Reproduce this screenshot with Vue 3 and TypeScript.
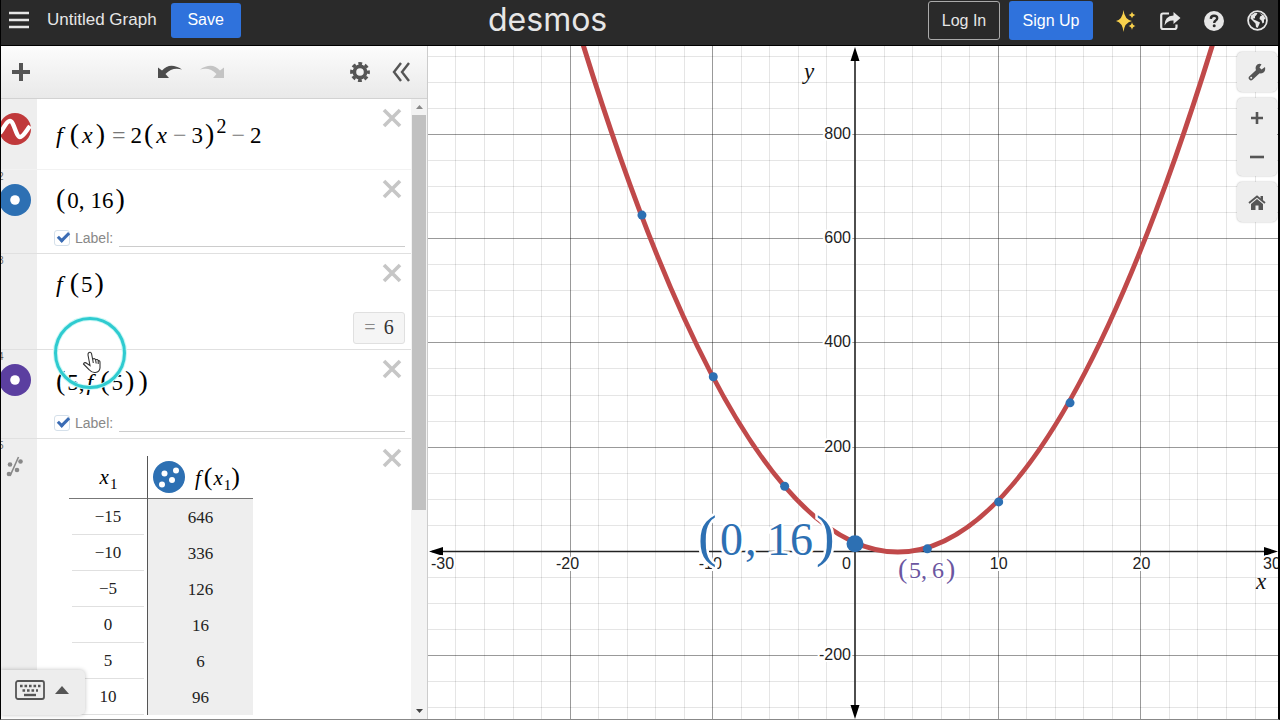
<script setup lang="ts">
import { defineComponent, h } from 'vue'

interface Expression {
  id: number
  kind: string
  icon: 'curve' | 'point' | 'none'
  color: string
  math: string
  label: boolean
  value: string
}

const expressions: Expression[] = [
  { id: 1, kind: 'first', icon: 'curve', color: '#c0393b', math: 'f(x)=2(x−3)^2−2', label: false, value: '' },
  { id: 2, kind: 'labelled', icon: 'point', color: '#2d70b3', math: '(0,16)', label: true, value: '' },
  { id: 3, kind: 'evaluated', icon: 'none', color: '', math: 'f(5)', label: false, value: '6' },
  { id: 4, kind: 'nested', icon: 'point', color: '#5b3fa0', math: '(5,f(5))', label: true, value: '' },
]

const rows = [
  ['−15', '646'],
  ['−10', '336'],
  ['−5', '126'],
  ['0', '16'],
  ['5', '6'],
  ['10', '96'],
]

const tokenClass = (c: string): string => {
  if (c === 'f') return 'fn'
  if (c === 'x') return 'var'
  if (c === '(' || c === ')') return 'par'
  if (c === '=' || c === '−') return 'op'
  if (c === ',') return 'comma'
  return 'num'
}

const MathText = defineComponent({
  props: { source: { type: String, required: true } },
  setup(props) {
    return () => {
      const out = []
      const s = props.source
      for (let i = 0; i < s.length; i++) {
        if (s[i] === '^') out.push(h('sup', s[++i]))
        else if (s[i] === '_') out.push(h('sub', s[++i]))
        else out.push(h('span', { class: tokenClass(s[i]) }, s[i]))
      }
      return h('span', { class: 'math' }, out)
    }
  },
})

const W = 850
const H = 673
const OX = 427
const OY = 505
const px = (x: number): number => OX + x * 14.27
const py = (y: number): number => OY - y * 0.5215
const f = (x: number): number => 2 * (x - 3) ** 2 - 2

const minorX = Array.from({ length: 31 }, (_, i) => (i - 15) * 2).filter((x) => x % 10 !== 0)
const minorY = Array.from({ length: 27 }, (_, i) => (i - 7) * 50).filter((y) => y % 200 !== 0)
const majorX = [-20, -10, 10, 20]
const majorY = [-200, 200, 400, 600, 800]
const curve = `M${px(-23)} ${py(f(-23))}Q${px(3)} ${py(-1354)} ${px(29)} ${py(f(29))}`
const points = [-15, -10, -5, 5, 10, 15]
const snap = (v: number): number => Math.round(v) + 0.5
</script>

<template>
  <div class="page">
    <header class="bar">
      <div class="left">
        <button class="icon" aria-label="Menu">
          <svg width="20" height="18" viewBox="0 0 20 18"><path d="M0 2h20M0 9h20M0 16h20" stroke="#e6e6e6" stroke-width="2.6" /></svg>
        </button>
        <span class="title">Untitled Graph</span>
        <button class="blue save">Save</button>
      </div>
      <a class="logo" href="#">desmos</a>
      <div class="right">
        <button class="outline">Log In</button>
        <button class="blue signup">Sign Up</button>
        <button class="icon" aria-label="What's new">
          <svg width="22" height="22" viewBox="0 0 22 22" fill="#f8d14c">
            <path d="M8.500 0Q9.500 9.500 17 11Q9.500 12.500 8.500 22Q7.500 12.500 1 11Q7.500 9.500 8.500 0Z" />
            <path d="M17 1.500Q17.500 4.500 20.500 5Q17.500 5.500 17 8.500Q16.500 5.500 13.500 5Q16.500 4.500 17 1.500ZM17 12Q17.500 15.500 20.500 16Q17.500 16.500 17 20Q16.500 16.500 13.500 16Q16.500 15.500 17 12Z" />
          </svg>
        </button>
        <button class="icon" aria-label="Share">
          <svg width="22" height="20" viewBox="0 0 22 20">
            <path d="M10 2.500H4Q2.200 2.500 2.200 4.500V16Q2.200 18 4 18H15.500Q17.500 18 17.500 16V13.500" fill="none" stroke="#e6e6e6" stroke-width="2.200" />
            <path d="M14.500 1L21.500 7L14.500 13V9.500Q9 9 5.500 14.500Q5.500 5 14.500 4.500Z" fill="#e6e6e6" />
          </svg>
        </button>
        <button class="icon" aria-label="Help">
          <svg width="20" height="20" viewBox="0 0 20 20">
            <circle cx="10" cy="10" r="10" fill="#e6e6e6" />
            <path d="M6.800 7.800Q7 4.800 10 4.800Q13.200 4.800 13.200 7.300Q13.200 8.600 11.600 9.600Q10.200 10.400 10.200 12" fill="none" stroke="#2b2b2b" stroke-width="2.400" />
            <circle cx="10.200" cy="14.800" r="1.500" fill="#2b2b2b" />
          </svg>
        </button>
        <button class="icon" aria-label="Language">
          <svg width="21" height="21" viewBox="0 0 21 21">
            <circle cx="10.500" cy="10.500" r="9.400" fill="none" stroke="#e6e6e6" stroke-width="1.800" />
            <path d="M4 5.500L7.500 3L10.500 3L9.500 5L8 6.500L8 8.500L6.500 8L6.500 9.500L9 10.500L13 12.500L12 15L10.500 18L9 17L8.500 13.500L6.500 11.500L3.500 8.500Z M12.500 3L17 5.500L18.500 9L17 9.500L17 12.500L15.500 13.500L14.500 10.500L12.500 9L13 6.500L15 5.500Z" fill="#e6e6e6" />
          </svg>
        </button>
      </div>
    </header>

    <main class="work">
      <section class="panel">
        <div class="tools">
          <button class="icon" aria-label="Add item">
            <svg width="20" height="20" viewBox="0 0 20 20"><path d="M10 1V19M1 10H19" stroke="#555" stroke-width="4" /></svg>
          </button>
          <div class="history">
            <button class="icon" aria-label="Undo">
              <svg width="24" height="14" viewBox="0 0 24 14" fill="#4d4d4d"><path d="M0 2.500L4 5.500Q12-3.500 24 4.500Q14.500 1.500 7.500 9L11 13H0Z" /></svg>
            </button>
            <button class="icon" aria-label="Redo">
              <svg width="24" height="14" viewBox="0 0 24 14" fill="#c4c4c4"><path d="M24 2.500L20 5.500Q12-3.500 0 4.500Q9.500 1.500 16.500 9L13 13H24Z" /></svg>
            </button>
          </div>
          <div class="settings">
            <button class="icon" aria-label="Settings">
              <svg width="20" height="20" viewBox="0 0 20 20">
                <circle cx="10" cy="10" r="8.400" fill="none" stroke="#555" stroke-width="3" stroke-dasharray="3.800 2.797" stroke-dashoffset="1.900" />
                <circle cx="10" cy="10" r="5.600" fill="none" stroke="#555" stroke-width="3.600" />
              </svg>
            </button>
            <button class="icon" aria-label="Hide list">
              <svg width="18" height="20" viewBox="0 0 18 20"><path d="M9 1L2 10L9 19M17 1L10 10L17 19" fill="none" stroke="#555" stroke-width="2.400" /></svg>
            </button>
          </div>
        </div>

        <div class="scroller">
          <div class="list">
            <article v-for="e in expressions" :key="e.id" class="row" :class="e.kind">
              <div class="gutter">
                <span v-if="e.id > 1" class="index">{{ e.id }}</span>
                <svg v-if="e.icon === 'curve'" class="badge" width="32" height="32" viewBox="0 0 32 32">
                  <circle cx="16" cy="16" r="16" :fill="e.color" />
                  <path d="M1 20C6 14 7 8 11 8C15 8 17 24 21 24C24 24 27 18 31 13" fill="none" stroke="#fff" stroke-width="4.400" />
                </svg>
                <svg v-if="e.icon === 'point'" class="badge" width="32" height="32" viewBox="0 0 32 32">
                  <circle cx="16" cy="16" r="16" :fill="e.color" />
                  <circle cx="16" cy="16" r="4.800" fill="#fff" />
                </svg>
              </div>
              <div class="body">
                <MathText :source="e.math" />
                <div v-if="e.label" class="label-row">
                  <input :id="'show' + e.id" type="checkbox" checked />
                  <label :for="'show' + e.id">Label:</label>
                  <input type="text" class="label-text" :aria-label="'Label text ' + e.id" />
                </div>
                <output v-if="e.value" class="value"><span>=</span> {{ e.value }}</output>
                <button class="close" aria-label="Delete">
                  <svg width="20" height="20" viewBox="0 0 20 20"><path d="M2 2L18 18M18 2L2 18" stroke="#c6c6c6" stroke-width="3.600" /></svg>
                </button>
              </div>
            </article>

            <article class="row data">
              <div class="gutter">
                <span class="index">5</span>
                <svg class="regress" width="18" height="22" viewBox="0 0 18 22">
                  <path d="M4 20L12.500 1" stroke="#888" stroke-width="1.600" />
                  <g fill="#888"><circle cx="4" cy="8.500" r="2.300" /><circle cx="14.500" cy="5.500" r="2.300" /><circle cx="11" cy="14" r="2.300" /><circle cx="3" cy="18" r="2.300" /></g>
                </svg>
              </div>
              <div class="body">
                <table>
                  <thead>
                    <tr>
                      <th><MathText source="x_1" /></th>
                      <th>
                        <div class="head">
                          <svg width="32" height="32" viewBox="0 0 32 32">
                            <circle cx="16" cy="16" r="16" fill="#2d70b3" />
                            <g fill="#fff"><circle cx="11.500" cy="12.500" r="3" /><circle cx="23" cy="9.500" r="3" /><circle cx="19" cy="19" r="3" /><circle cx="9" cy="23.500" r="3" /></g>
                          </svg>
                          <MathText source="f(x_1)" />
                        </div>
                      </th>
                    </tr>
                  </thead>
                  <tbody>
                    <tr v-for="r in rows" :key="r[0]">
                      <td><span class="cell">{{ r[0] }}</span></td>
                      <td>{{ r[1] }}</td>
                    </tr>
                  </tbody>
                </table>
                <button class="close" aria-label="Delete">
                  <svg width="20" height="20" viewBox="0 0 20 20"><path d="M2 2L18 18M18 2L2 18" stroke="#c6c6c6" stroke-width="3.600" /></svg>
                </button>
              </div>
            </article>
          </div>
          <div class="track">
            <svg width="7" height="4" viewBox="0 0 7 4"><path d="M0 4L3.500 0L7 4Z" fill="#888" /></svg>
            <div class="thumb"></div>
            <svg width="7" height="4" viewBox="0 0 7 4"><path d="M0 0L3.500 4L7 0Z" fill="#444" /></svg>
          </div>
        </div>

        <button class="keypad" aria-label="Open keypad">
          <svg width="30" height="20" viewBox="0 0 30 20">
            <rect x="1" y="1" width="28" height="18" rx="2" fill="none" stroke="#555" stroke-width="1.800" />
            <path d="M5 6H25.500M7.500 10.500H23" stroke="#555" stroke-width="2.600" stroke-dasharray="2.600 1.900" />
            <path d="M9 15H21" stroke="#555" stroke-width="2.400" />
          </svg>
          <svg width="14" height="8" viewBox="0 0 14 8"><path d="M0 8L7 0L14 8Z" fill="#555" /></svg>
        </button>

        <svg class="pointer" width="76" height="76" viewBox="0 0 76 76">
          <circle cx="38" cy="38" r="34.500" fill="none" stroke="#c9f7f5" stroke-width="5" />
          <circle cx="38" cy="38" r="34.500" fill="none" stroke="#2fcbd0" stroke-width="3" />
          <path d="M37 37.500Q39 36.500 39.600 39L40.600 44Q43 43 43.600 44.800Q45.500 43.800 46.200 45.600Q48 45.200 48 47.500V53Q47.500 57 43.500 57.500Q40 58 37.500 55L31.500 49Q32.500 46.500 35 48.500L38 50.500L36 40Q35.800 38.300 37 37.500ZM40.600 44L41.300 48M43.600 44.800L44.200 48.500M46.200 45.600V49" fill="#fff" stroke="#333" stroke-width="1.100" />
        </svg>
      </section>

      <section class="graph">
        <svg class="plot" :viewBox="`0 0 ${W} ${H}`" preserveAspectRatio="xMidYMid slice" role="img" aria-label="Graph">
          <g stroke="#000" stroke-opacity="0.1">
            <line v-for="x in minorX" :key="x" :x1="snap(px(x))" :x2="snap(px(x))" y1="0" :y2="H" />
            <line v-for="y in minorY" :key="y" x1="0" :x2="W" :y1="snap(py(y))" :y2="snap(py(y))" />
          </g>
          <g stroke="#000" stroke-opacity="0.4">
            <line v-for="x in majorX" :key="x" :x1="snap(px(x))" :x2="snap(px(x))" y1="0" :y2="H" />
            <line v-for="y in majorY" :key="y" x1="0" :x2="W" :y1="snap(py(y))" :y2="snap(py(y))" />
          </g>
          <path :d="`M${OX} 4V${H - 4}M4 ${OY + 0.5}H${W - 4}`" stroke="#222" stroke-width="1.600" />
          <path :d="`M${OX} 1l-4.500 14h9ZM${OX} ${H}l-4.500 -14h9ZM1 ${OY + 0.5}l14 -4.500v9ZM${W} ${OY + 0.5}l-14 -4.500v9Z`" fill="#000" />
          <g class="ticks">
            <text x="3" :y="OY + 18">-30</text>
            <text v-for="x in majorX" :key="x" :x="x < 0 ? px(x) - 2 : px(x) + 1" :y="OY + 18" text-anchor="middle">{{ x }}</text>
            <text :x="OX - 4" :y="OY + 18" text-anchor="end">0</text>
            <text x="835" :y="OY + 18">30</text>
            <text v-for="y in majorY" :key="y" :x="OX - 4" :y="py(y) + 5" text-anchor="end">{{ y }}</text>
          </g>
          <text class="axis" x="376" y="33">y</text>
          <text class="axis" x="828" y="543">x</text>
          <path :d="curve" fill="none" stroke="#c0494a" stroke-width="5" />
          <g fill="#2d70b3">
            <circle v-for="x in points" :key="x" :cx="px(x) + 1" :cy="py(f(x)) + 1" r="4.500" />
            <circle :cx="px(0)" :cy="py(16) + 1" r="8.500" />
          </g>
          <g class="note big">
            <text x="270" y="509" class="paren">(</text>
            <text x="292" y="509">0</text>
            <text x="317" y="509">,</text>
            <text x="339" y="509">16</text>
            <text x="388" y="509" class="paren">)</text>
          </g>
          <g class="note small">
            <text x="470" y="532" class="paren">(</text>
            <text x="481" y="532">5</text>
            <text x="493" y="532">,</text>
            <text x="504" y="532">6</text>
            <text x="518" y="532" class="paren">)</text>
          </g>
        </svg>
        <div class="controls">
          <button aria-label="Graph settings">
            <svg width="18" height="18" viewBox="0 0 18 18">
              <path d="M3 15L10 8.500" stroke="#555" stroke-width="4.600" stroke-linecap="round" />
              <path d="M17 4L13.500 6.500L11.500 4.500L13.500 1.200Q10 0 8 3Q7 5 8 7.500L10.500 10Q13 11 15.500 9.500Q17.800 7.500 17 4Z" fill="#555" />
              <circle cx="3.200" cy="14.800" r="1" fill="#eee" />
            </svg>
          </button>
          <div class="zoom">
            <button aria-label="Zoom in"><svg width="14" height="14" viewBox="0 0 14 14"><path d="M7 1V13M1 7H13" stroke="#555" stroke-width="2.600" /></svg></button>
            <button aria-label="Zoom out"><svg width="14" height="14" viewBox="0 0 14 14"><path d="M0 7H14" stroke="#555" stroke-width="2.600" /></svg></button>
          </div>
          <button aria-label="Default viewport">
            <svg width="18" height="15" viewBox="0 0 18 15">
              <path d="M1 8L9 1.500L17 8" fill="none" stroke="#555" stroke-width="1.800" />
              <path d="M12.500 1H15V5.500L12.500 3.500ZM3 9L9 4L15 9V15H10.500V10.500H7.500V15H3Z" fill="#555" />
            </svg>
          </button>
        </div>
      </section>
    </main>
  </div>
</template>

<style>
body {
  margin: 0;
}
</style>

<style scoped>
.page {
  box-sizing: border-box;
  height: 100vh;
  display: flex;
  flex-direction: column;
  overflow: hidden;
  background: #fff;
  border-left: 1px solid #000;
  border-right: 2px solid #000;
  border-bottom: 1px solid #888;
  font-family: "Liberation Sans", Arial, sans-serif;
}
button {
  border: 0;
  padding: 0;
  background: none;
  font-family: inherit;
  display: flex;
  align-items: center;
  justify-content: center;
}
svg {
  display: block;
  flex: none;
}
.bar {
  box-sizing: border-box;
  height: 46px;
  flex: none;
  display: grid;
  grid-template-columns: 487px 1fr auto;
  background: #2a2a2a;
  border-bottom: 1px solid #000;
  color: #e6e6e6;
}
.left,
.right {
  display: flex;
  align-items: center;
  height: 41px;
}
.left {
  padding-left: 8px;
  height: 40px;
}
.title {
  margin: 0 14px 0 18px;
  font-size: 17px;
}
.blue,
.outline {
  box-sizing: border-box;
  color: #fff;
  font-size: 16px;
  border-radius: 3px;
}
.blue {
  background: #2f72dc;
}
.save {
  width: 70px;
  height: 35px;
}
.logo {
  color: #e6e6e6;
  font: 32px/40px Inter, sans-serif;
  text-decoration: none;
}
.outline {
  width: 72px;
  height: 39px;
  border: 1px solid #aaa;
  color: #e6e6e6;
  margin-right: 9px;
}
.signup {
  width: 84px;
  height: 39px;
  margin-right: 11px;
}
.right .icon {
  width: 44px;
}
.right .icon:last-child {
  width: 42px;
}
.work {
  flex: 1;
  min-height: 0;
  display: flex;
}
.panel {
  position: relative;
  width: 427px;
  flex: none;
  display: flex;
  flex-direction: column;
  overflow: hidden;
  box-sizing: border-box;
  border-right: 1px solid #ccc;
}
.tools {
  box-sizing: border-box;
  height: 53px;
  flex: none;
  display: flex;
  align-items: center;
  justify-content: space-between;
  padding: 0 17px 0 10px;
  background: linear-gradient(#fcfcfc, #e9e9e9);
  border-bottom: 1px solid #d2d2d2;
}
.history,
.settings {
  display: flex;
  align-items: center;
  gap: 18px;
}
.settings {
  gap: 22px;
}
.scroller {
  flex: 1;
  min-height: 0;
  display: flex;
}
.list {
  flex: 1;
  overflow: hidden;
}
.row {
  display: flex;
  border-bottom: 1px solid #e0e0e0;
  box-sizing: border-box;
  min-height: 84px;
}
.row.first {
  min-height: 71px;
  border-bottom-color: #f2f2f2;
}
.row.evaluated {
  min-height: 96px;
}
.row.nested {
  min-height: 89px;
}
.gutter {
  position: relative;
  width: 36px;
  flex: none;
  background: #eee;
}
.index {
  position: absolute;
  left: -3px;
  top: 1px;
  font-size: 10px;
  color: #666;
}
.badge {
  margin: 14px 0 0 -2px;
}
.regress {
  margin: 17px 0 0 5px;
}
.body {
  position: relative;
  flex: 1;
  padding: 11px 6px 0 17px;
}
.first .body {
  padding-top: 17px;
}
.nested .body {
  padding-top: 13px;
}
.close {
  position: absolute;
  top: 9px;
  right: 9px;
}
:deep(.math) {
  display: flex;
  align-items: baseline;
  height: 36px;
  line-height: 36px;
  font-family: "Liberation Serif", "Times New Roman", serif;
  font-size: 23px;
  font-weight: normal;
  color: #000;
  white-space: nowrap;
}
:deep(.fn) {
  font-style: italic;
  font-size: 24px;
  margin: 0 5px 0 2px;
}
:deep(.var) {
  font-style: italic;
  font-size: 24px;
  margin: 0 1px;
}
:deep(.par) {
  font-size: 28px;
  margin: 0 2px;
}
:deep(.op) {
  color: #777;
  font-size: 24px;
  margin: 0 5px;
}
:deep(.comma) {
  margin-right: 6px;
}
:deep(sup),
:deep(sub) {
  line-height: 0;
  vertical-align: baseline;
  position: relative;
}
:deep(sup) {
  font-size: 20px;
  top: -10px;
}
:deep(sub) {
  font-size: 17px;
  top: 5px;
}
.nested :deep(.comma) {
  margin-right: 0;
}
.label-row {
  display: flex;
  align-items: center;
  height: 18px;
  margin-top: 12px;
  font-size: 14px;
  color: #888;
}
.nested .label-row {
  margin-top: 15px;
}
.label-row input[type="checkbox"] {
  appearance: none;
  box-sizing: border-box;
  width: 16px;
  height: 16px;
  margin: 0 5px 0 0;
  border: 1px solid #d5e0ea;
  border-radius: 3px;
  position: relative;
}
.label-row input[type="checkbox"]::after {
  content: "";
  position: absolute;
  left: 5px;
  top: -1px;
  width: 4px;
  height: 9px;
  border: solid #3b6cb4;
  border-width: 0 3px 3px 0;
  transform: rotate(45deg);
}
.label-text {
  flex: 1;
  min-width: 0;
  height: 18px;
  box-sizing: border-box;
  margin-left: 6px;
  padding: 0;
  border: 0;
  border-bottom: 1px solid #ccc;
  background: none;
  font: inherit;
}
.value {
  box-sizing: border-box;
  display: block;
  width: 52px;
  height: 32px;
  margin: 11px 0 0 auto;
  border: 1px solid #e0e0e0;
  border-radius: 3px;
  background: #f5f5f5;
  font: 20px/29px "Liberation Serif", serif;
  text-align: center;
  color: #333;
}
.value span {
  color: #888;
  margin-right: 3px;
}
.data {
  border-bottom: 0;
}
.data .body {
  padding: 17px 0 0 32px;
}
table {
  border-spacing: 0;
  table-layout: fixed;
  width: 184px;
  font: 17px/35px "Liberation Serif", serif;
  text-align: center;
  color: #222;
}
th,
td {
  padding: 0;
}
th {
  height: 42px;
  border-bottom: 1px solid #777;
}
th:first-child,
td:first-child {
  width: 78px;
  border-right: 1px solid #555;
}
td:last-child {
  background: #eee;
}
td {
  height: 36px;
}
.cell {
  display: block;
  margin: 0 3px;
  border-bottom: 1px solid #e0e0e0;
}
th :deep(.math) {
  justify-content: center;
}
th :deep(.var),
th :deep(.fn) {
  font-size: 21px;
}
th :deep(.fn) {
  margin-right: 3px;
}
th :deep(.par) {
  font-size: 26px;
  margin: 0;
}
th :deep(sub) {
  font-size: 15px;
}
.head {
  display: flex;
  align-items: center;
  gap: 8px;
  padding-left: 5px;
}
.track {
  width: 16px;
  flex: none;
  display: flex;
  flex-direction: column;
  align-items: center;
  justify-content: space-between;
  padding: 6px 0;
  box-sizing: border-box;
  background: #f3f3f3;
}
.thumb {
  width: 14px;
  height: 65%;
  margin: 6px 0 auto;
  background: #c1c1c1;
}
.keypad {
  position: absolute;
  left: 0;
  bottom: 4px;
  width: 84px;
  height: 45px;
  gap: 10px;
  padding: 0 2px 6px 0;
  box-sizing: border-box;
  background: #ededed;
  border-radius: 0 5px 5px 0;
  box-shadow: 0 0 4px rgba(0, 0, 0, 0.25);
}
.pointer {
  position: absolute;
  left: 51px;
  top: 269px;
}
.graph {
  position: relative;
  flex: 1;
  min-width: 0;
  overflow: hidden;
}
.plot {
  width: 100%;
  height: 100%;
}
.ticks text {
  font-size: 16px;
  fill: #222;
  stroke: #fff;
  stroke-width: 4px;
  paint-order: stroke;
}
.axis {
  font: italic 23px "Liberation Serif", serif;
  fill: #111;
}
.note text {
  font-family: "Liberation Serif", serif;
  stroke: #fff;
  paint-order: stroke;
}
.big text {
  font-size: 46px;
  fill: #2d70b3;
  stroke-width: 5px;
}
.big .paren {
  font-size: 56px;
}
.small text {
  font-size: 24px;
  fill: #6b56a0;
  stroke-width: 3px;
}
.small .paren {
  font-size: 28px;
}
.controls {
  position: absolute;
  top: 6px;
  right: 1px;
  display: flex;
  flex-direction: column;
  gap: 6px;
}
.controls > * {
  background: #eee;
  border-radius: 5px;
  box-shadow: 0 0 2px rgba(0, 0, 0, 0.3);
}
.controls button {
  width: 40px;
  height: 40px;
}
.zoom button {
  height: 39px;
}
</style>
